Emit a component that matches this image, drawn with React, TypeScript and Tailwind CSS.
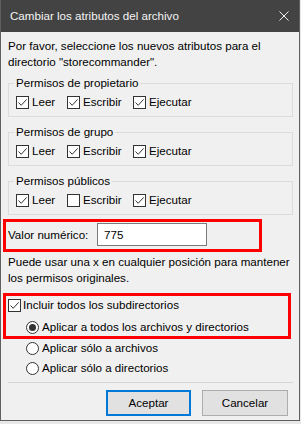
import React from "react";

const font = { fontFamily: '"Segoe UI", "Liberation Sans", Arial, sans-serif' };

function CheckBox({ checked }: { checked: boolean }) {
  return (
    <span className="inline-flex w-[13px] h-[13px] border border-[#333333] bg-white items-center justify-center shrink-0">
      {checked && (
        <svg width="11" height="11" viewBox="0 0 11 11">
          <path d="M1.5 5.5 L4.2 8.3 L9.6 2.4" fill="none" stroke="#333333" strokeWidth="1" />
        </svg>
      )}
    </span>
  );
}

function Radio({ checked }: { checked: boolean }) {
  return (
    <span className="inline-flex w-[13px] h-[13px] rounded-full border border-[#333333] bg-white items-center justify-center shrink-0">
      {checked && <span className="block w-[7px] h-[7px] rounded-full bg-[#333333]" />}
    </span>
  );
}

const groups = [
  { title: "Permisos de propietario", values: [true, true, true] },
  { title: "Permisos de grupo", values: [true, true, true] },
  { title: "Permisos públicos", values: [true, false, true] },
];

const labels = ["Leer", "Escribir", "Ejecutar"];
const colWidths = ["w-[51px]", "w-[66px]", "w-auto"];

function PermGroup({ title, values, first }: { title: string; values: boolean[]; first?: boolean }) {
  return (
    <fieldset className={`border border-[#dcdcdc] pl-[7px] pb-[6px] ${first ? "mt-[5px]" : "mt-[7px]"}`}>
      <legend className="-ml-[2px] px-[2px] leading-[16px]">{title}</legend>
      <div className="flex items-center h-[16px] mt-[3px]">
        {labels.map((label, i) => (
          <label key={label} className={`flex items-center gap-[3px] ${colWidths[i]}`}>
            <CheckBox checked={values[i]} />
            <span>{label}</span>
          </label>
        ))}
      </div>
    </fieldset>
  );
}

export default function App() {
  return (
    <div className="w-[301px] h-[424px] bg-[#e8e8e8] text-[11.6px] text-black whitespace-nowrap" style={font}>
      <div className="w-[300px] h-[421px] bg-[#f0f0f0] border-l border-r border-b border-[#5f5f5f] flex flex-col">
        {/* Title bar */}
        <div className="h-[32px] bg-[#434343] text-[#f4f4f4] flex items-center justify-between pl-[9px] pr-[9px] shrink-0">
          <span>Cambiar los atributos del archivo</span>
          <svg width="10" height="10" viewBox="0 0 10 10" className="mr-[1px]">
            <path d="M0.5 0.5 L9.5 9.5 M9.5 0.5 L0.5 9.5" stroke="#f0f0f0" strokeWidth="1" />
          </svg>
        </div>

        <div className="flex flex-col pl-[7px] pr-[6px] leading-[16px]">
          <p className="mt-[6px]">
            Por favor, seleccione los nuevos atributos para el
            <br />
            directorio "storecommander".
          </p>

          {groups.map((g, i) => (
            <PermGroup key={g.title} title={g.title} values={g.values} first={i === 0} />
          ))}

          {/* Valor numérico */}
          <div className="relative flex items-center mt-[8px] h-[23px]">
            <span className="w-[89px]">Valor numérico:</span>
            <div className="w-[110px] h-[23px] bg-white border border-[#7a7a7a] flex items-center pl-[6px]">
              775
            </div>
            <div className="absolute left-[-5px] top-[-4px] w-[259px] h-[33px] border-[3px] border-[#ff0000] pointer-events-none" />
          </div>

          <p className="mt-[8px]">
            Puede usar una x en cualquier posición para mantener
            <br />
            los permisos originales.
          </p>

          {/* Subdirectorios */}
          <div className="relative mt-[9px]">
            <label className="flex items-center gap-[2px] h-[20px]">
              <CheckBox checked />
              <span>Incluir todos los subdirectorios</span>
            </label>
            <div className="flex flex-col pl-[18px]">
              <label className="flex items-center gap-[3px] h-[20px] mt-[2px]">
                <Radio checked />
                <span>Aplicar a todos los archivos y directorios</span>
              </label>
              <label className="flex items-center gap-[3px] h-[20px] mt-[1px]">
                <Radio checked={false} />
                <span>Aplicar sólo a archivos</span>
              </label>
              <label className="flex items-center gap-[3px] h-[20px]">
                <Radio checked={false} />
                <span>Aplicar sólo a directorios</span>
              </label>
            </div>
            <div className="absolute left-[-5px] top-[-2px] w-[288px] h-[46px] border-[3px] border-[#ff0000] pointer-events-none" />
          </div>

          <div className="h-px bg-[#d5d5d5] mt-[4px]" />

          <div className="flex justify-end gap-[11px] mt-[7px] pr-[5px]">
            <button className="w-[85px] h-[26px] bg-[#e1e1e1] border-2 border-[#0078d7]">Aceptar</button>
            <button className="w-[86px] h-[26px] bg-[#e1e1e1] border border-[#adadad]">Cancelar</button>
          </div>
        </div>
      </div>
    </div>
  );
}
